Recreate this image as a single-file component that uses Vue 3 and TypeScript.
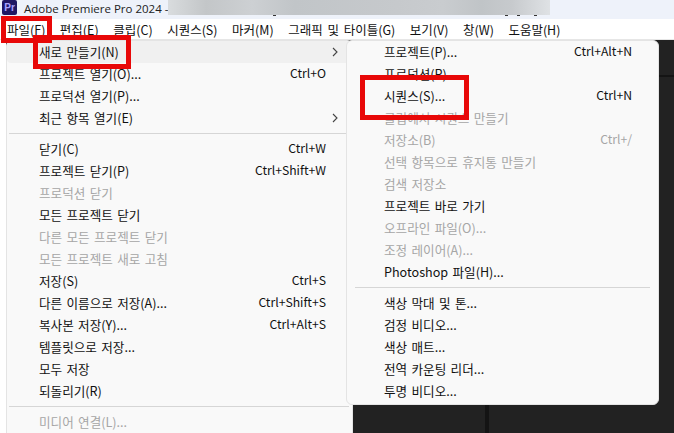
<script setup lang="ts">
type Item = { t?: string; k?: string; d?: boolean; sep?: boolean; arrow?: boolean; hover?: boolean };
const top = ['파일(F)', '편집(E)', '클립(C)', '시퀀스(S)', '마커(M)', '그래픽 및 타이틀(G)', '보기(V)', '창(W)', '도움말(H)'];
const ticks = [273, 505, 517, 534];
const left: Item[] = [
  { t: '새로 만들기(N)', arrow: true, hover: true },
  { t: '프로젝트 열기(O)...', k: 'Ctrl+O' },
  { t: '프로덕션 열기(P)...' },
  { t: '최근 항목 열기(E)', arrow: true },
  { sep: true },
  { t: '닫기(C)', k: 'Ctrl+W' },
  { t: '프로젝트 닫기(P)', k: 'Ctrl+Shift+W' },
  { t: '프로덕션 닫기', d: true },
  { t: '모든 프로젝트 닫기' },
  { t: '다른 모든 프로젝트 닫기', d: true },
  { t: '모든 프로젝트 새로 고침', d: true },
  { t: '저장(S)', k: 'Ctrl+S' },
  { t: '다른 이름으로 저장(A)...', k: 'Ctrl+Shift+S' },
  { t: '복사본 저장(Y)...', k: 'Ctrl+Alt+S' },
  { t: '템플릿으로 저장...' },
  { t: '모두 저장' },
  { t: '되돌리기(R)' },
  { sep: true },
  { t: '미디어 연결(L)...', d: true },
];
const right: Item[] = [
  { t: '프로젝트(P)...', k: 'Ctrl+Alt+N' },
  { t: '프로덕션(R)...' },
  { t: '시퀀스(S)...', k: 'Ctrl+N' },
  { t: '클립에서 시퀀스 만들기', d: true },
  { t: '저장소(B)', k: 'Ctrl+/', d: true },
  { t: '선택 항목으로 휴지통 만들기', d: true },
  { t: '검색 저장소', d: true },
  { t: '프로젝트 바로 가기' },
  { t: '오프라인 파일(O)...', d: true },
  { t: '조정 레이어(A)...', d: true },
  { t: 'Photoshop 파일(H)...' },
  { sep: true },
  { t: '색상 막대 및 톤...' },
  { t: '검정 비디오...' },
  { t: '색상 매트...' },
  { t: '전역 카운팅 리더...' },
  { t: '투명 비디오...' },
];
</script>

<template>
  <div class="app">
    <header class="titlebar">
      <span class="logo">Pr</span>
      <span class="title">Adobe Premiere Pro 2024 -</span>
      <span class="blur"></span>
      <i v-for="x in ticks" :key="x" class="tick" :style="{ left: x + 'px' }"></i>
    </header>
    <nav class="menubar">
      <span v-for="m in top" :key="m" class="top">{{ m }}</span>
    </nav>
    <main class="stage">
      <section class="menu left">
        <template v-for="(i, n) in left" :key="n">
          <div v-if="i.sep" class="sep"></div>
          <div v-else class="row" :class="{ dis: i.d, hover: i.hover }">
            <span>{{ i.t }}</span>
            <span v-if="i.k" class="key">{{ i.k }}</span>
            <svg v-if="i.arrow" width="6" height="10" viewBox="0 0 6 10"><path d="M1 1l4 4-4 4" fill="none" stroke="#444" stroke-width="1.1" /></svg>
          </div>
        </template>
      </section>
      <section class="menu right">
        <template v-for="(i, n) in right" :key="n">
          <div v-if="i.sep" class="sep"></div>
          <div v-else class="row" :class="{ dis: i.d }">
            <span>{{ i.t }}</span>
            <span v-if="i.k" class="key">{{ i.k }}</span>
          </div>
        </template>
      </section>
      <div class="hline"></div>
      <div class="vline"></div>
    </main>
    <div class="mark m1"></div>
    <div class="mark m2"></div>
    <div class="mark m3"></div>
  </div>
</template>

<style>
html, body { margin: 0; overflow: hidden; }
</style>

<style scoped>
.app {
  position: relative;
  width: 674px;
  height: 433px;
  overflow: hidden;
  background: #fff;
  font-family: "Noto Sans CJK KR", "Liberation Sans", sans-serif;
  font-size: 12.6px;
  word-spacing: 1.5px;
  color: #111;
}
.titlebar {
  position: relative;
  height: 19px;
  display: flex;
  align-items: flex-start;
  background: #eef2fa;
  padding-left: 2px;
  box-sizing: border-box;
}
.logo {
  width: 15px;
  height: 15px;
  background: #1f1763;
  color: #a9a3ff;
  border-radius: 2px;
  font: bold 10px/15px "Liberation Sans", sans-serif;
  text-align: center;
  word-spacing: 0;
}
.title {
  margin-left: 7px;
  font: 11.5px/18px "Open Sans", sans-serif;
  color: #222;
  width: 144px;
  white-space: nowrap;
  word-spacing: 0;
  flex: none;
}
.blur {
  width: 382px;
  height: 15px;
  background: linear-gradient(90deg, #d9dcde 0%, #c3c6c8 10%, #cdd0d3 22%, #c1c5c8 33%, #c6c9cc 60%, #c9cccf 72%, #c0c4c7 82%, #c7cacd 90%, #dfe2e5 100%);
}
.tick {
  position: absolute;
  top: 15px;
  width: 3px;
  height: 1px;
  background: #333;
}
.menubar {
  height: 21px;
  display: flex;
  align-items: center;
  gap: 14.5px;
  padding-left: 7px;
  background: #fff;
  box-sizing: border-box;
  border-bottom: 1px solid #e6e6e6;
  font-size: 12.5px;
  word-spacing: 2px;
}
.stage {
  position: relative;
  height: 393px;
  background: linear-gradient(90deg, #fff 6px, #222 6px);
}
.menu {
  position: absolute;
  top: 0;
  box-sizing: border-box;
  background: #f9f9f9;
  border: 1px solid #e4e4e4;
  border-radius: 6px;
}
.left { left: 6px; width: 347px; height: 400px; z-index: 1; }
.right { left: 346px; width: 313px; height: 365px; z-index: 2; }
.hline { position: absolute; left: 659px; right: 0; top: 35px; height: 2px; background: #141414; }
.vline { position: absolute; left: 485px; top: 365px; width: 4px; height: 30px; background: #141414; }
.row {
  height: 22px;
  display: flex;
  align-items: center;
  justify-content: space-between;
  box-sizing: border-box;
  padding: 0 26px 2px 32px;
  white-space: nowrap;
}
.key { font-size: 12.2px; }
.right .row { padding-left: 37px; }
.left .row svg { margin-right: -12px; margin-top: 2px; }
.hover { background: #f0f0f0; border-radius: 4px; }
.dis { color: #a6a6a6; }
.sep { height: 1px; margin: 4px 3px 4px 2px; background: #d6d6d6; }
.right .sep { margin: 4px 8px; }
.mark {
  position: absolute;
  box-sizing: border-box;
  border: 5px solid #e80808;
  z-index: 5;
}
.m1 { left: 1px; top: 16px; width: 51px; height: 27px; }
.m2 { left: 33px; top: 35px; width: 98px; height: 34px; }
.m3 { left: 360px; top: 75px; width: 109px; height: 45px; }
</style>
